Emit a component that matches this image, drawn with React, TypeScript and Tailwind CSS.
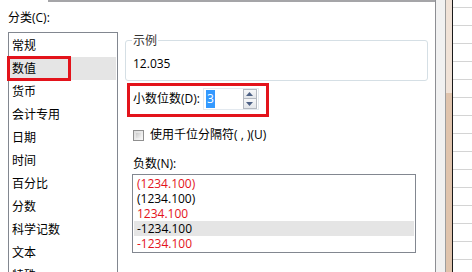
import React from "react";

const FONT = '"Open Sans", "Noto Sans CJK SC", sans-serif';

const categories = ["常规", "数值", "货币", "会计专用", "日期", "时间", "百分比", "分数", "科学记数", "文本", "特殊", "自定义"];

const negatives: { text: string; red: boolean; selected?: boolean }[] = [
  { text: "(1234.100)", red: true },
  { text: "(1234.100)", red: false },
  { text: "1234.100", red: true },
  { text: "-1234.100", red: false, selected: true },
  { text: "-1234.100", red: true },
];

function Spinner() {
  return (
    <div className="flex flex-col w-[14px] h-[20px] ml-auto mr-[1px]">
      <div className="h-[10px] border border-[#b3b8c0] bg-gradient-to-b from-[#f6f7f9] to-[#e3e6ea] flex items-center justify-center">
        <svg width="7" height="4" viewBox="0 0 7 4"><path d="M0 4 L3.5 0 L7 4 Z" fill="#4d6185" /></svg>
      </div>
      <div className="h-[10px] border border-t-0 border-[#b3b8c0] bg-gradient-to-b from-[#f6f7f9] to-[#e3e6ea] flex items-center justify-center">
        <svg width="7" height="4" viewBox="0 0 7 4"><path d="M0 0 L3.5 4 L7 0 Z" fill="#4d6185" /></svg>
      </div>
    </div>
  );
}

export default function App() {
  return (
    <div className="w-[472px] h-[272px] overflow-hidden flex bg-white text-[12px] text-black" style={{ fontFamily: FONT }}>
      {/* dialog tab panel */}
      <div className="w-[436px] h-full border-r border-[#8d8e93] flex flex-col shrink-0">
        <div className="flex h-[2px] shrink-0">
          <div className="w-[48px]" />
          <div className="flex-1 bg-[#a5a5a8]" />
        </div>
        <div className="pl-[8px] mt-[8px] h-[16px] leading-[16px]">分类(C):</div>
        <div className="flex mt-[6px]">
          {/* category list */}
          <div className="ml-[8px] w-[110px] h-[260px] border border-[#828790] pt-[1px] relative shrink-0">
            {categories.map((c, i) => (
              <div
                key={c}
                className={
                  "h-[23px] leading-[23px] pl-[3px] mr-[1px] whitespace-nowrap " + (i === 1 ? "bg-[#e5e5e5]" : "")
                }
              >
                {c}
              </div>
            ))}
            <div className="absolute left-[-2px] top-[23px] w-[64px] h-[25px] border-[3px] border-[#e3131b]" />
          </div>

          {/* right column */}
          <div className="ml-[7px] w-[303px] flex flex-col">
            {/* sample group */}
            <div className="relative mt-[8px] h-[41px] border border-[#d5dfe5] rounded-[3px] pl-[7px] pt-[15px]">
              <span className="absolute left-[6px] top-[-6px] px-[1px] bg-white leading-[12px] text-[#333]">示例</span>
              <div className="leading-[16px]">12.035</div>
            </div>

            {/* decimals row */}
            <div className="relative mt-[7px] flex items-center h-[22px] pl-[8px]">
              <span className="leading-[16px] whitespace-nowrap">小数位数(D):</span>
              <div className="ml-[3px] w-[56px] h-[22px] border border-[#e3e9ef] flex items-center pl-[2px]">
                <span className="bg-[#3399ff] text-white leading-[18px] px-[1px]">3</span>
                <Spinner />
              </div>
              <div className="absolute left-[2px] top-[-5px] w-[142px] h-[34px] border-[3px] border-[#e3131b]" />
            </div>

            {/* thousands separator */}
            <div className="mt-[17px] flex items-center h-[16px] pl-[8px]">
              <div className="w-[11px] h-[11px] border border-[#8f8f8f] bg-gradient-to-br from-[#dcdcdc] to-[#f8f8f8] p-[2px]">
                <div className="w-full h-full bg-gradient-to-br from-[#cbcbcb] to-[#f2f2f2]" />
              </div>
              <span className="ml-[6px] leading-[16px] whitespace-nowrap">使用千位分隔符( , )(U)</span>
            </div>

            {/* negatives */}
            <div className="mt-[13px] pl-[8px] h-[16px] leading-[16px]">负数(N):</div>
            <div className="mt-[2px] ml-[7px] w-[284px] h-[79px] border border-[#828790] pt-[1px]">
              {negatives.map((n, i) => (
                <div
                  key={i}
                  className={
                    "h-[15px] leading-[15px] mx-[1px] pl-[3px] " +
                    (n.red ? "text-[#e3131b] " : "text-black ") +
                    (n.selected ? "bg-[#e5e5e5]" : "")
                  }
                >
                  {n.text}
                </div>
              ))}
            </div>
          </div>
        </div>
      </div>

      {/* dialog edge / splitter */}
      <div className="w-[9px] h-full bg-[#f1f1f1] shrink-0" />
      <div className="w-[1px] h-full bg-[#9d9d9d] shrink-0" />
      <div className="w-[6px] h-full flex flex-col shrink-0">
        <div className="h-[93px] bg-[#f0e2d7]" />
        <div className="flex-1 bg-[#e0c4ad]" />
      </div>
      <div className="w-[1px] h-full bg-[#1a1a1a] shrink-0" />

      {/* spreadsheet column */}
      <div className="flex-1 flex flex-col">
        <div className="h-[8px] border-b border-[#d4d4d4] shrink-0" />
        {Array.from({ length: 15 }).map((_, i) => (
          <div key={i} className="h-[18px] border-b border-[#d4d4d4] shrink-0" />
        ))}
      </div>
    </div>
  );
}
